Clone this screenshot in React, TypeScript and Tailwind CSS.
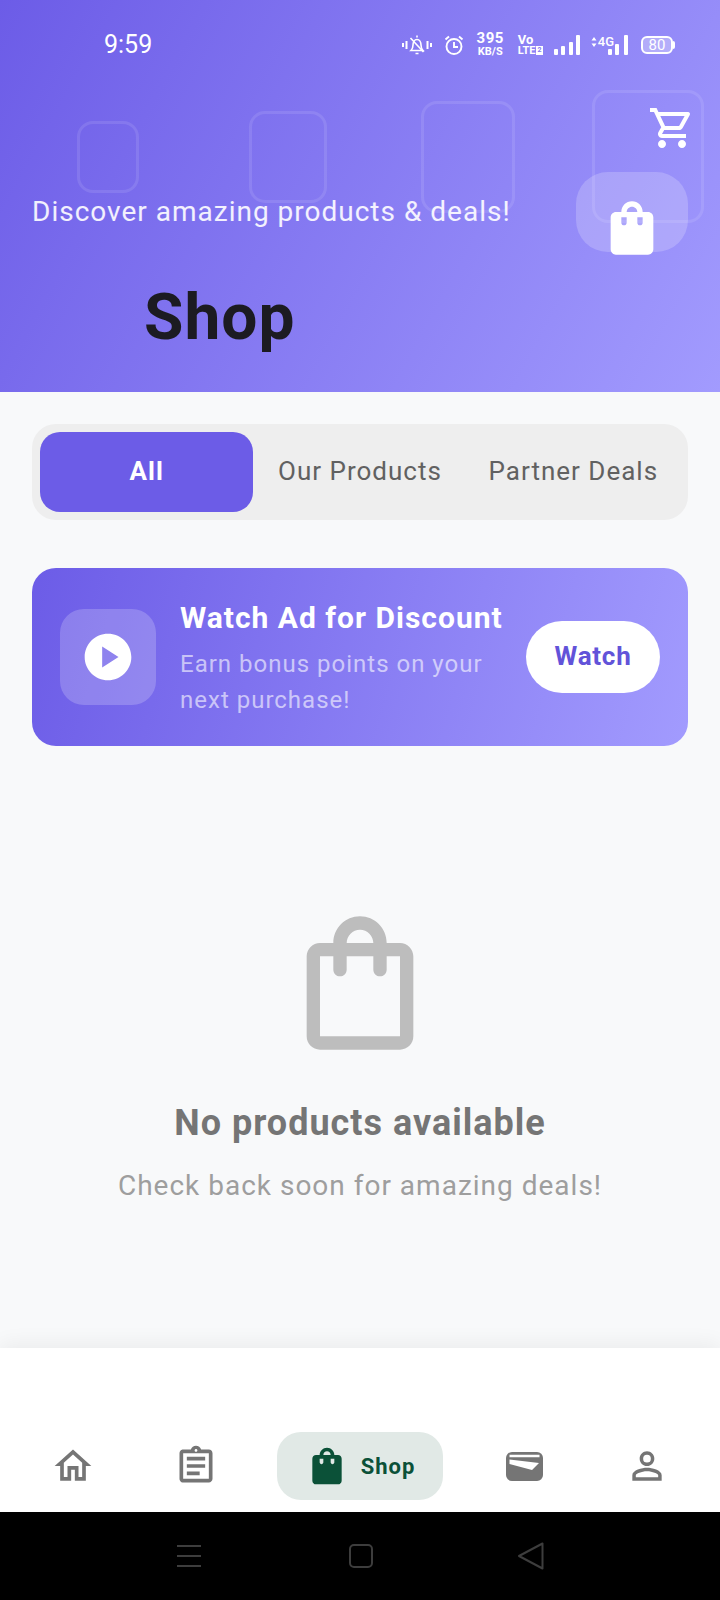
import React from "react";
import { MdOutlineHome, MdOutlineAssignment, MdOutlineShoppingCart, MdPersonOutline, MdPlayCircle } from "react-icons/md";

const bagOutline =
	"M18 6h-2c0-2.21-1.79-4-4-4S8 3.79 8 6H6c-1.1 0-2 .9-2 2v12c0 1.1.9 2 2 2h12c1.1 0 2-.9 2-2V8c0-1.1-.9-2-2-2zm-6-2c1.1 0 2 .9 2 2h-4c0-1.1.9-2 2-2zm6 16H6V8h2v2c0 .55.45 1 1 1s1-.45 1-1V8h4v2c0 .55.45 1 1 1s1-.45 1-1V8h2v12z";
const bagFilled =
	"M18 6h-2c0-2.21-1.79-4-4-4S8 3.79 8 6H6c-1.1 0-2 .9-2 2v12c0 1.1.9 2 2 2h12c1.1 0 2-.9 2-2V8c0-1.1-.9-2-2-2zm-8 4c0 .55-.45 1-1 1s-1-.45-1-1V8h2v2zm2-6c1.1 0 2 .9 2 2h-4c0-1.1.9-2 2-2zm4 6c0 .55-.45 1-1 1s-1-.45-1-1V8h2v2z";

function Bag({ d, className }: { d: string; className: string }) {
	return (
		<svg viewBox="0 0 24 24" fill="currentColor" fillRule="evenodd" className={className}>
			<path d={d} />
		</svg>
	);
}

function StatusIcons() {
	return (
		<div className="flex items-center text-white">
			<svg viewBox="0 0 30 20" fill="none" stroke="white" strokeWidth="2" className="w-[30px] h-[20px]">
				<path d="M1 8v4M4.500 6v8M25.500 6v8M29 8v4" />
				<path d="M9 15.500c1.500-1.500 2-3 2-5.500 0-3 1.500-5.500 4-5.500s4 2.500 4 5.500c0 2.500 .5 4 2 5.500z" strokeWidth="1.600" />
				<path d="M8.500 3l13 14" strokeWidth="1.600" />
				<path d="M13.500 18.500h3M15 2.500v-2" strokeWidth="1.600" />
			</svg>
			<svg viewBox="0 0 20 20" fill="none" stroke="white" strokeWidth="1.900" className="w-[20px] h-[20px] ml-[12px]">
				<circle cx="10" cy="11.500" r="7.500" />
				<path d="M10 7V12H14M1.500 4.500L5 1.500M18.500 4.500L15 1.500" />
			</svg>
			<div className="ml-[13px] flex flex-col items-center font-bold w-[27px] -mt-[1px]">
				<span className="text-[15px] leading-[13px] tracking-[0.5px]">395</span>
				<span className="text-[11px] leading-[11px] mt-[1px]">KB/S</span>
			</div>
			<div className="ml-[14px] flex flex-col font-bold w-[25px]">
				<span className="text-[13px] leading-[11px]">Vo</span>
				<span className="flex items-center text-[11px] leading-[11px]">
					LTE
					<span className="ml-[1px] w-[7px] h-[9px] bg-white text-[#8577ef] text-[7px] leading-[9px] text-center">2</span>
				</span>
			</div>
			<svg viewBox="0 0 26 20" fill="white" className="w-[26px] h-[20px] ml-[11px]">
				<rect x="0" y="14" width="4" height="6" rx="1" />
				<rect x="7" y="11" width="4" height="9" rx="1" />
				<rect x="15" y="7" width="4" height="13" rx="1" />
				<rect x="22" y="0" width="4" height="20" rx="1" />
			</svg>
			<div className="ml-[11px] flex items-start h-[20px]">
				<svg viewBox="0 0 6 10" fill="white" className="w-[6px] h-[10px] mt-[2px]">
					<path d="M3 0l2.500 3.500h-5zM3 10l2.500-3.500h-5z" />
				</svg>
				<span className="text-[13px] leading-[14px] font-medium ml-[1px]">4G</span>
			</div>
			<svg viewBox="0 0 21 20" fill="white" className="w-[21px] h-[20px] -ml-[6px]">
				<rect x="0" y="14" width="4" height="6" rx="1" />
				<rect x="7" y="9" width="4" height="11" rx="1" />
				<rect x="16" y="0" width="4" height="20" rx="1" />
			</svg>
			<div className="ml-[12px] flex items-center">
				<div className="w-[32px] h-[18px] rounded-[6px] border-2 border-white bg-white/30 flex items-center justify-center text-[15px] leading-none">
					80
				</div>
				<div className="w-[2px] h-[8px] bg-white rounded-r-[2px]" />
			</div>
		</div>
	);
}

function Tab({ label, active }: { label: string; active?: boolean }) {
	return (
		<div
			className={`flex-1 flex items-center justify-center pb-[2px] rounded-[20px] text-[26px] tracking-[1px] ${
				active ? "bg-[#6c5ce7] text-white font-bold" : "text-[#616161]"
			}`}
		>
			{label}
		</div>
	);
}

function NavIcon({ children, className }: { children: React.ReactNode; className?: string }) {
	return <div className={`w-[92px] h-[68px] flex items-center justify-center text-[#757575] ${className ?? ""}`}>{children}</div>;
}

export default function App() {
	return (
		<div className="w-[720px] h-[1600px] flex flex-col bg-[#f8f9fa] font-['Roboto',sans-serif] overflow-hidden">
			{/* header */}
			<div className="relative h-[392px] shrink-0 bg-[linear-gradient(118.600deg,#6c5ce7,#a29bfe)]">
				<div className="absolute left-[77px] top-[121px] w-[62px] h-[72px] rounded-[16px] border-[3px] border-white/10" />
				<div className="absolute left-[249px] top-[111px] w-[78px] h-[92px] rounded-[16px] border-[3px] border-white/10" />
				<div className="absolute left-[421px] top-[101px] w-[94px] h-[112px] rounded-[16px] border-[3px] border-white/10" />
				<div className="absolute left-[592px] top-[90px] w-[112px] h-[133px] rounded-[16px] border-[3px] border-white/10" />

				<div className="relative h-full flex flex-col">
					<div className="h-[104px] shrink-0 pt-[33px] pl-[104px] pr-[45px] flex items-start justify-between">
						<span className="text-white text-[25px] leading-[24px]">9:59</span>
						<StatusIcons />
					</div>
					<div className="flex justify-end pr-[24px]">
						<MdOutlineShoppingCart className="w-[48px] h-[48px] text-white" />
					</div>
					<div className="flex items-start justify-between pl-[32px] pr-[32px] mt-[20px] h-[80px]">
						<p className="text-[28px] leading-[36px] tracking-[1px] text-white/90 pt-[22px]">Discover amazing products &amp; deals!</p>
						<div className="w-[112px] h-[80px] rounded-[32px] bg-white/20 px-[24px] pt-[24px]">
							<Bag d={bagFilled} className="w-[64px] h-[64px] text-white" />
						</div>
					</div>
					<h1 className="pl-[144px] mt-[28px] text-[64px] leading-[76px] tracking-[1px] font-bold text-[#1c1b22]">Shop</h1>
				</div>
			</div>

			{/* body */}
			<div className="flex-1 flex flex-col px-[32px] pt-[32px]">
				<div className="h-[96px] rounded-[24px] bg-[#eeeeee] p-[8px] flex">
					<Tab label="All" active />
					<Tab label="Our Products" />
					<Tab label="Partner Deals" />
				</div>

				<div className="mt-[48px] h-[178px] rounded-[24px] px-[28px] flex items-center bg-[linear-gradient(105.200deg,#6c5ce7,#a29bfe)]">
					<div className="w-[96px] h-[96px] shrink-0 rounded-[24px] bg-white/20 flex items-center justify-center">
						<MdPlayCircle className="w-[56px] h-[56px] text-white" />
					</div>
					<div className="flex-1 ml-[24px] pt-[2px]">
						<div className="text-[30px] leading-[38px] font-bold tracking-[1px] text-white">Watch Ad for Discount</div>
						<div className="mt-[9px] text-[24px] leading-[36px] tracking-[1px] text-white/60">
							Earn bonus points on your
							<br />
							next purchase!
						</div>
					</div>
					<div className="w-[134px] h-[72px] shrink-0 pb-[2px] rounded-full bg-white flex items-center justify-center text-[26px] font-bold tracking-[0.750px] text-[#6253d9]">
						Watch
					</div>
				</div>

				<div className="flex flex-col items-center pt-[157px]">
					<Bag d={bagOutline} className="w-[160px] h-[160px] text-[#bdbdbd]" />
					<div className="mt-[38px] text-[36px] leading-[44px] font-bold tracking-[1px] text-[#757575]">No products available</div>
					<div className="mt-[21px] text-[28px] leading-[40px] tracking-[1px] text-[#9e9e9e]">Check back soon for amazing deals!</div>
				</div>
			</div>

			{/* bottom nav */}
			<div className="h-[164px] shrink-0 bg-white shadow-[0_-4px_20px_rgba(0,0,0,0.06)] px-[27px] pb-[12px] flex items-end justify-between">
				<NavIcon>
					<MdOutlineHome className="w-[44px] h-[44px]" />
				</NavIcon>
				<NavIcon className="pr-[4px]">
					<MdOutlineAssignment className="w-[44px] h-[44px]" />
				</NavIcon>
				<div className="h-[68px] rounded-[24px] bg-[#e1e9e6] px-[28px] flex items-center gap-[12px] text-[#0b5138]">
					<Bag d={bagFilled} className="w-[44px] h-[44px]" />
					<span className="text-[22px] font-bold tracking-[1px]">Shop</span>
				</div>
				<NavIcon className="pl-[4px]">
					<svg viewBox="0 0 37 29" className="w-[37px] h-[29px]">
						<rect width="37" height="29" rx="6" fill="currentColor" />
						<path d="M3.500 2.700h30v2.600h-30zM3.500 7.500L33 11L26 18L3.500 12z" fill="white" />
					</svg>
				</NavIcon>
				<NavIcon>
					<MdPersonOutline className="w-[44px] h-[44px]" />
				</NavIcon>
			</div>

			{/* system bar */}
			<div className="h-[88px] shrink-0 bg-black flex items-center justify-center">
				<svg viewBox="0 0 24 22" fill="none" stroke="#3d3d3d" strokeWidth="2" className="w-[24px] h-[22px] mr-[148px]">
					<path d="M0 1h24M0 11h24M0 21h24" />
				</svg>
				<div className="w-[24px] h-[24px] rounded-[5px] border-2 border-[#3d3d3d]" />
				<svg viewBox="0 0 26 28" fill="none" stroke="#3d3d3d" strokeWidth="2" strokeLinejoin="round" className="w-[26px] h-[28px] ml-[145px]">
					<path d="M24.500 1.500V26.500L1 14z" />
				</svg>
			</div>
		</div>
	);
}
